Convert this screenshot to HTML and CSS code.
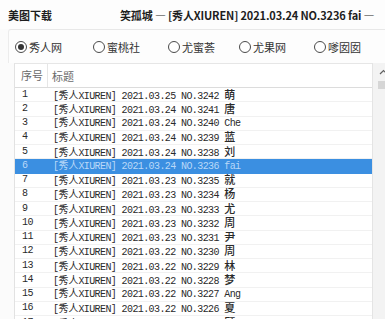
FILE: index.html
```html
<!DOCTYPE html>
<html lang="zh-CN">
<head>
<meta charset="utf-8">
<title>美图下载</title>
<link rel="stylesheet" href="styles.css">
</head>
<body>
<div class="window">
  <div class="titlebar">
    <div class="app">美图下载</div>
    <div class="title">笑孤城 — [秀人XIUREN] 2021.03.24 NO.3236 fai —</div>
  </div>
  <div class="group">
    <label class="radio"><span class="circle checked"></span>秀人网</label>
    <label class="radio"><span class="circle"></span>蜜桃社</label>
    <label class="radio"><span class="circle"></span>尤蜜荟</label>
    <label class="radio"><span class="circle"></span>尤果网</label>
    <label class="radio"><span class="circle"></span>嗲囡囡</label>
  </div>
  <div class="list">
    <div class="table">
      <div class="head">
        <div class="c1">序号</div>
        <div class="c2">标题</div>
      </div>
      <div class="row"><div class="c1">1</div><div class="c2">[<span class="cj">秀人</span>XIUREN] 2021.03.25 NO.3242 <span class="end">萌</span></div></div>
      <div class="row"><div class="c1">2</div><div class="c2">[<span class="cj">秀人</span>XIUREN] 2021.03.24 NO.3241 <span class="end">唐</span></div></div>
      <div class="row"><div class="c1">3</div><div class="c2">[<span class="cj">秀人</span>XIUREN] 2021.03.24 NO.3240 Che</div></div>
      <div class="row"><div class="c1">4</div><div class="c2">[<span class="cj">秀人</span>XIUREN] 2021.03.24 NO.3239 <span class="end">蓝</span></div></div>
      <div class="row"><div class="c1">5</div><div class="c2">[<span class="cj">秀人</span>XIUREN] 2021.03.24 NO.3238 <span class="end">刘</span></div></div>
      <div class="row sel"><div class="c1">6</div><div class="c2">[<span class="cj">秀人</span>XIUREN] 2021.03.24 NO.3236 fai</div></div>
      <div class="row"><div class="c1">7</div><div class="c2">[<span class="cj">秀人</span>XIUREN] 2021.03.23 NO.3235 <span class="end">就</span></div></div>
      <div class="row"><div class="c1">8</div><div class="c2">[<span class="cj">秀人</span>XIUREN] 2021.03.23 NO.3234 <span class="end">杨</span></div></div>
      <div class="row"><div class="c1">9</div><div class="c2">[<span class="cj">秀人</span>XIUREN] 2021.03.23 NO.3233 <span class="end">尤</span></div></div>
      <div class="row"><div class="c1">10</div><div class="c2">[<span class="cj">秀人</span>XIUREN] 2021.03.23 NO.3232 <span class="end">周</span></div></div>
      <div class="row"><div class="c1">11</div><div class="c2">[<span class="cj">秀人</span>XIUREN] 2021.03.23 NO.3231 <span class="end">尹</span></div></div>
      <div class="row"><div class="c1">12</div><div class="c2">[<span class="cj">秀人</span>XIUREN] 2021.03.22 NO.3230 <span class="end">周</span></div></div>
      <div class="row"><div class="c1">13</div><div class="c2">[<span class="cj">秀人</span>XIUREN] 2021.03.22 NO.3229 <span class="end">林</span></div></div>
      <div class="row"><div class="c1">14</div><div class="c2">[<span class="cj">秀人</span>XIUREN] 2021.03.22 NO.3228 <span class="end">梦</span></div></div>
      <div class="row"><div class="c1">15</div><div class="c2">[<span class="cj">秀人</span>XIUREN] 2021.03.22 NO.3227 Ang</div></div>
      <div class="row"><div class="c1">16</div><div class="c2">[<span class="cj">秀人</span>XIUREN] 2021.03.22 NO.3226 <span class="end">夏</span></div></div>
      <div class="row"><div class="c1">17</div><div class="c2">[<span class="cj">秀人</span>XIUREN] 2021.03.22 NO.3225 <span class="end">顾</span></div></div>
    </div>
    <div class="scroll">
      <div class="arrow">
        <svg width="9" height="6" viewBox="0 0 9 6"><path d="M1 5 L4.5 1.5 L8 5" fill="none" stroke="#606060" stroke-width="1.2"/></svg>
      </div>
      <div class="thumb"></div>
    </div>
  </div>
</div>
</body>
</html>
```

FILE: styles.css
```css
html, body {
  margin: 0;
  padding: 0;
}
body {
  width: 385px;
  height: 319px;
  overflow: hidden;
  background: #fbfbfb;
  font-family: "Noto Sans CJK SC", "Noto Sans", sans-serif;
  color: #222;
}
.window {
  width: 385px;
  height: 319px;
  display: flex;
  flex-direction: column;
  overflow: hidden;
}
.titlebar {
  height: 29px;
  flex: none;
  display: flex;
  align-items: center;
  font-size: 11px;
  font-weight: 700;
  white-space: nowrap;
  background: #fdfdfd;
}
.app {
  width: 112px;
  padding-left: 8px;
  flex: none;
  color: #1e1e1e;
}
.title {
  color: #1e1e1e;
  letter-spacing: -0.15px;
}
.group {
  height: 33px;
  flex: none;
  margin-left: 8px;
  border-top: 1px solid #e8e8e8;
  border-left: 1px solid #ececec;
  border-top-left-radius: 3px;
  display: grid;
  grid-template-columns: 78px 75px 71px 75px auto;
  align-items: center;
  padding-left: 6px;
  background: #fdfdfd;
}
.radio {
  display: flex;
  align-items: center;
  gap: 2px;
  font-size: 11px;
  color: #333;
  white-space: nowrap;
}
.circle {
  width: 10px;
  height: 10px;
  border: 1px solid #4a4a4a;
  border-radius: 50%;
  background: #fff;
  position: relative;
  flex: none;
}
.circle.checked::after {
  content: "";
  position: absolute;
  left: 2px;
  top: 2px;
  width: 6px;
  height: 6px;
  border-radius: 50%;
  background: #333;
}
.list {
  flex: 1;
  margin-left: 14px;
  display: flex;
  min-height: 0;
}
.table {
  width: 357px;
  flex: none;
  background: #fff;
  border-left: 1px solid #e2e2e2;
  border-top: 1px solid #e6e6e6;
}
.head {
  height: 23px;
  display: flex;
  align-items: center;
  border-bottom: 1px solid #dcdcdc;
  font-size: 11px;
  color: #6a6a6a;
}
.head .c1 {
  width: 33px;
  padding-left: 6px;
  box-sizing: border-box;
  border-right: 1px solid #e6e6e6;
  height: 23px;
  line-height: 23px;
}
.head .c2 {
  padding-left: 4px;
}
.row {
  height: 14.25px;
  box-sizing: border-box;
  border-bottom: 1px solid #f1f1f1;
  display: flex;
  align-items: center;
  font-family: "Liberation Mono", "Noto Sans CJK SC", monospace;
  font-size: 10px;
  line-height: 12px;
  letter-spacing: -0.6px;
  color: #2a2a2a;
  white-space: nowrap;
  overflow: hidden;
}
.row .c1 {
  width: 34px;
  padding-left: 7px;
  box-sizing: border-box;
  flex: none;
}
.row .c2 {
  padding-left: 4px;
  height: 12px;
  white-space: pre;
}
.cj {
  font-family: "Noto Sans CJK SC", sans-serif;
  font-size: 10px;
  letter-spacing: 0;
  line-height: 10px;
}
.end {
  font-family: "Noto Sans CJK SC", sans-serif;
  font-size: 11px;
  font-weight: 500;
  letter-spacing: 0;
  line-height: 10px;
}
.row.sel {
  background: #3b8fe1;
  color: #b9d8f8;
  border-bottom-color: #3b8fe1;
}
.scroll {
  width: 17px;
  flex: none;
  background: #f3f3f3;
  border-left: 1px solid #e4e4e4;
  display: flex;
  flex-direction: column;
  align-items: flex-end;
}
.arrow {
  width: 14px;
  height: 17px;
  display: flex;
  align-items: center;
  justify-content: center;
}
.thumb {
  width: 12px;
  height: 8px;
  margin-top: 1px;
  background: #d6d6d6;
}
```
